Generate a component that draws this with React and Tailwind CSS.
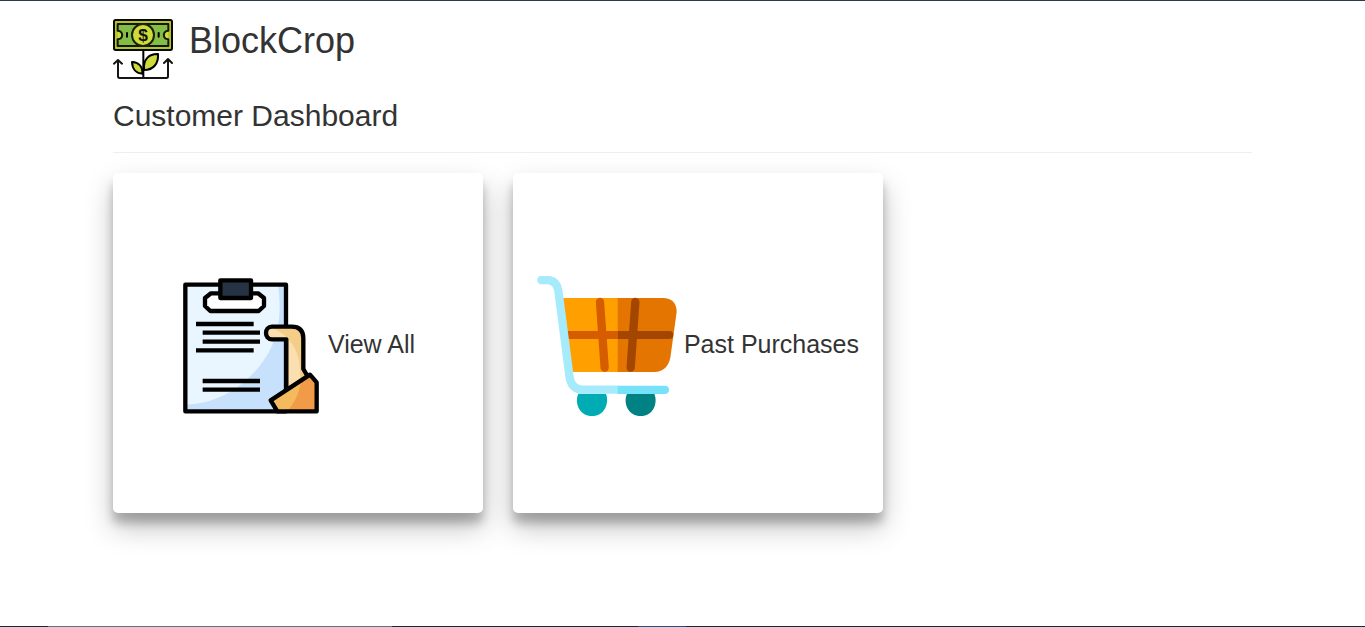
function LogoIcon() {
  return (
    <svg viewBox="24 27 180 180" className="size-15 shrink-0" aria-hidden="true" fill="none" stroke="#000" strokeLinecap="round" strokeLinejoin="round">
      <rect x="27" y="30" width="174" height="90" rx="5" fill="#b5c42c" stroke="#0a0a05" strokeWidth="6" />
      <path d="M38 42H190V62C172 64 172 86 190 88V108H38V88C56 86 56 64 38 62Z" fill="#84bd45" stroke="#14180a" strokeWidth="6" />
      <path d="M38 65C51 67 51 83 38 85ZM190 65C177 67 177 83 190 85Z" fill="#cddc39" stroke="none" />
      <path d="M66 69V80M161 69V80" strokeWidth="6" />
      <circle cx="114" cy="75" r="33" fill="#cddc39" stroke="#1c200a" strokeWidth="6" />
      <text x="114" y="93" textAnchor="middle" fontFamily="Liberation Sans, sans-serif" fontSize="52" fontWeight="700" fill="#111" stroke="none">$</text>
      <path d="M115 122V203" strokeWidth="6" />
      <path d="M117 180C114 148 132 131 159 132C161 160 146 180 117 180Z" fill="#cddc39" strokeWidth="6" />
      <path d="M113 191C113 171 102 157 81 156C82 177 93 191 113 191Z" fill="#cddc39" strokeWidth="6" />
      <path d="M39 152V199Q39 204 44 204H184Q189 204 189 199V149M27 161L39 150L51 161M177 159L189 147L201 159" stroke="#151515" strokeWidth="6" />
    </svg>
  );
}

function ClipboardIcon() {
  return (
    <svg viewBox="18 18 420 420" className="inline-block size-35 align-middle" aria-hidden="true" fill="none" stroke="#000">
      <path d="M31 44H333V424H31Z" fill="#c7e1fc" stroke="none" />
      <path d="M31 44H309C323 147 308 224 249 294C189 364 116 401 31 404Z" fill="#e9f6ff" stroke="none" />
      <path d="M31 44H333V424H31Z" strokeWidth="13" strokeLinejoin="round" />
      <path d="M108 70H249L267 84V108L251 123H106L90 108V84Z" fill="#fff" strokeWidth="13" strokeLinejoin="round" />
      <rect x="136" y="31" width="92" height="53" fill="#263344" strokeWidth="13" strokeLinejoin="round" />
      <path d="M63 162H236M83 188H255M83 215H255M63 241H236M83 333H255M83 359H255" strokeWidth="13" />
      <path d="M334 366V208H291C267 208 267 170 291 170H350Q385 170 385 205V297L398 319Z" fill="#f4ce88" stroke="none" />
      <path d="M280 180L294 175C353 200 383 260 374 332L334 359V208H290C278 206 271 193 280 180Z" fill="#fbdfb0" stroke="none" />
      <path d="M294 175H350Q379 177 379 205V280C366 228 340 193 294 175Z" fill="#f4ce88" stroke="none" />
      <path d="M334 366V208H291C267 208 267 170 291 170H350Q385 170 385 205V297L398 319" strokeWidth="13" strokeLinejoin="round" />
      <path d="M287 391L405 314L425 337V424H307Z" fill="#f19a47" stroke="none" />
      <path d="M287 391L378 332C373 370 358 399 336 424H307Z" fill="#f4bb5e" stroke="none" />
      <path d="M287 391L405 314L425 337V424H307Z" strokeWidth="13" strokeLinejoin="round" />
    </svg>
  );
}

function CartIcon() {
  return (
    <svg viewBox="22 24 420 420" className="inline-block size-35 align-middle" aria-hidden="true" fill="none" strokeLinecap="round" strokeLinejoin="round">
      <path d="M146 377H229C240 407 223 444 187 444C151 444 133 407 146 377Z" fill="#00acb3" />
      <path d="M292 377H374C386 407 369 444 333 444C297 444 279 407 292 377Z" fill="#008184" />
      <path d="M98 90H265V312H121Z" fill="#ffa000" />
      <path d="M264 90H400Q441 92 441 132L422 269Q413 310 374 312H264Z" fill="#e47500" />
      <path d="M211 102L225 299" stroke="#d65c00" strokeWidth="25" />
      <path d="M111 189H264V213H113Z" fill="#d65c00" />
      <path d="M317 102L303 299" stroke="#a24600" strokeWidth="25" />
      <path d="M264 189H419Q431 189 431 201T419 213H264Z" fill="#a24600" />
      <path d="M35 36H57Q81 39 86 67L120 329Q125 360 153 365H264" stroke="#a6ebfb" strokeWidth="25" />
      <path d="M264 353H405Q418 353 418 365T405 378H264Z" fill="#75e2fa" />
    </svg>
  );
}

const cards = [
  { label: "View All", Icon: ClipboardIcon },
  { label: "Past Purchases", Icon: CartIcon },
];

export default function App() {
  return (
    <div className="flex min-h-screen flex-col border-t border-[#2f3b47] bg-white font-['Liberation_Sans',Arial,sans-serif] text-[#333]">
      <div className="mx-auto w-full max-w-[1169px] grow px-[15px] pt-[18px]">
        <header className="flex gap-4">
          <LogoIcon />
          <h1 className="pt-0.5 text-4xl">BlockCrop</h1>
        </header>
        <h2 className="mt-5 text-3xl leading-[33px]">Customer Dashboard</h2>
        <hr className="my-5 border-[#eee]" />
        <main className="grid grid-cols-[repeat(auto-fill,370px)] gap-[30px]">
          {cards.map(({ label, Icon }) => (
            <a
              key={label}
              href="#"
              className="flex min-h-[340px] items-center justify-center rounded-[5px] bg-white pt-1.5 shadow-[0_14px_28px_rgba(0,0,0,0.25),0_10px_10px_rgba(0,0,0,0.22)]"
            >
              <h3 className="text-center text-[25px]">
                <Icon /> {label}
              </h3>
            </a>
          ))}
        </main>
      </div>
      <footer className="flex h-px bg-[#0c2c45]">
        <div className="ml-12 w-86 bg-[#57748b]" />
        <div className="ml-[246px] w-12 bg-[#17558c]" />
      </footer>
    </div>
  );
}
